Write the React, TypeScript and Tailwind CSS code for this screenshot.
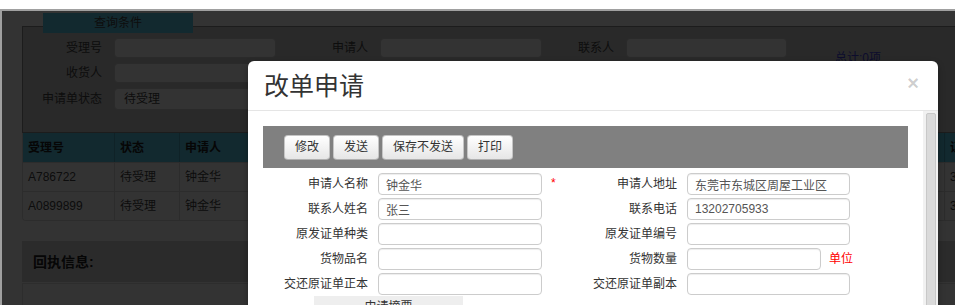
import React from "react";

const font = "font-[family-name:'Liberation_Sans','Noto_Sans_CJK_SC',sans-serif]";

const bgLabel = "shrink-0 text-right text-[12px] leading-[20px] text-[#444]";
const bgInput = "h-[20px] shrink-0 rounded-[4px] border border-[#cfcfcf] bg-white";

// columns 4-7 sit behind the dialog
const columns = ["受理号", "状态", "申请人", "", "", "", "", "证书编号"];
const rows = [
  ["A786722", "待受理", "钟金华", "", "", "", "", "3"],
  ["A0899899", "待受理", "钟金华", "", "", "", "", "3"],
];

const formRows = [
  { l: "申请人名称", lv: "钟金华", star: true, r: "申请人地址", rv: "东莞市东城区周屋工业区" },
  { l: "联系人姓名", lv: "张三", r: "联系电话", rv: "13202705933" },
  { l: "原发证单种类", lv: "", r: "原发证单编号", rv: "" },
  { l: "货物品名", lv: "", r: "货物数量", rv: "", unit: true },
  { l: "交还原证单正本", lv: "", r: "交还原证单副本", rv: "" },
];

function QueryPanel() {
  return (
    <div className="pl-[20px] pt-[2px]">
      <div className="relative z-10 -mb-[7px] ml-[21px] flex h-[20px] w-[150px] items-center justify-center bg-[#5ccbea] text-[12px] leading-[14px] text-[#444]">
        查询条件
      </div>
      <div className="flex h-[107px] w-[1000px] border border-[#8c8c8c] bg-[#cccccc] pt-[11px]">
        <div className="flex flex-col gap-[5px]">
          <div className="flex items-center">
            <span className={`${bgLabel} w-[79px]`}>受理号</span>
            <div className={`${bgInput} ml-[12px] w-[162px]`} />
            <span className={`${bgLabel} w-[92px]`}>申请人</span>
            <div className={`${bgInput} ml-[12px] w-[162px]`} />
            <span className={`${bgLabel} w-[72px]`}>联系人</span>
            <div className={`${bgInput} ml-[12px] w-[161px]`} />
          </div>
          <div className="flex items-center">
            <span className={`${bgLabel} w-[79px]`}>收货人</span>
            <div className={`${bgInput} ml-[12px] w-[162px]`} />
          </div>
          <div className="flex items-center">
            <span className={`${bgLabel} w-[79px]`}>申请单状态</span>
            <div className="ml-[12px] flex h-[22px] w-[200px] items-center rounded-[4px] border border-[#cfcfcf] bg-white pl-[9px] text-[12px] leading-[14px] text-[#444]">
              待受理
            </div>
          </div>
        </div>
        <div className="ml-[48px] pt-[13px] text-[12px] leading-[14px] text-[#4444dd]">总计:0项</div>
      </div>
    </div>
  );
}

function ResultTable() {
  const grid = "grid grid-cols-[92px_65px_153px_153px_153px_153px_153px_120px]";
  return (
    <div className="ml-[20px] w-[1100px] overflow-hidden rounded-bl-[4px] border-b border-l border-[#dddddd]">
      <div className={`${grid} h-[29px] bg-[#5ccbea]`}>
        {columns.map((c, i) => (
          <div key={i} className="flex items-center overflow-hidden whitespace-nowrap border-r border-[#4aa9c4] pl-[5px] text-[12px] font-bold leading-[14px] text-[#222]">
            {c}
          </div>
        ))}
      </div>
      {rows.map((r, i) => (
        <div key={i} className={`${grid} h-[29px] border-t border-[#dddddd] bg-white`}>
          {r.map((v, j) => (
            <div key={j} className="flex items-center border-r border-[#dddddd] pl-[5px] text-[12px] leading-[14px] text-[#444]">
              {v}
            </div>
          ))}
        </div>
      ))}
    </div>
  );
}

function Receipt() {
  return (
    <div className="ml-[20px] mt-[20px] w-[1100px]">
      <div className="flex h-[41px] items-center bg-[#d6d6d6] pl-[11px] text-[14px] font-bold leading-[16px] text-[#222]">
        回执信息:
      </div>
      <div className="mt-[1px] h-[40px] border-l border-t border-[#e2e2e2] bg-white" />
    </div>
  );
}

function Modal() {
  return (
    <div className="absolute left-[248px] top-[61px] z-30 h-[300px] w-[690px] rounded-t-[6px] bg-white shadow-[0_3px_7px_rgba(0,0,0,0.3)]">
      <div className="flex h-[50px] items-center justify-between border-b border-[#e5e5e5] pl-[16px] pr-[19px]">
        <h3 className="text-[25px] leading-[30px] text-[#333]">改单申请</h3>
        <span className="-mt-[5px] text-[20px] font-bold leading-none text-black/20">×</span>
      </div>
      <div className="flex">
        <div className="w-[675px] px-[15px] pt-[15px]">
          <div className="flex h-[42px] gap-[3px] bg-[#808080] pl-[21px] pt-[9px]">
            {["修改", "发送", "保存不发送", "打印"].map((b) => (
              <button
                key={b}
                className="h-[25px] rounded-[4px] border border-[#c5c5c5] border-b-[#b0b0b0] bg-linear-to-b from-white to-[#e6e6e6] px-[10px] text-[12px] leading-[23px] text-[#333]"
              >
                {b}
              </button>
            ))}
          </div>
          <div className="mt-[5px] flex flex-col gap-[3px]">
            {formRows.map((f) => (
              <div key={f.l} className="flex h-[22px] items-center">
                <span className="w-[105px] shrink-0 text-right text-[12px] leading-[14px] text-[#333]">{f.l}</span>
                <input
                  readOnly
                  value={f.lv}
                  className="ml-[10px] h-[22px] w-[164px] shrink-0 rounded-[4px] border border-[#cccccc] px-[7px] text-[12px] text-[#555] shadow-[inset_0_1px_1px_rgba(0,0,0,0.075)] outline-none"
                />
                <span className="w-[30px] shrink-0 self-start pl-[9px] pt-[3px] text-[12px] leading-[14px] text-[#f00]">
                  {f.star ? "*" : ""}
                </span>
                <span className="w-[105px] shrink-0 text-right text-[12px] leading-[14px] text-[#333]">{f.r}</span>
                <input
                  readOnly
                  value={f.rv}
                  className={`ml-[10px] h-[22px] shrink-0 rounded-[4px] border border-[#cccccc] px-[7px] text-[12px] text-[#555] shadow-[inset_0_1px_1px_rgba(0,0,0,0.075)] outline-none ${f.unit ? "w-[134px]" : "w-[163px]"}`}
                />
                {f.unit && <span className="ml-[8px] text-[12px] leading-[14px] text-[#f00]">单位</span>}
              </div>
            ))}
          </div>
          <div className="ml-[51px] mt-[1px] h-[30px] w-[149px] bg-[#eeeeee] pt-[2px] text-center text-[12px] leading-[18px] text-[#333]">
            申请摘要
          </div>
        </div>
        <div className="h-[250px] w-[15px] bg-[#f1f1f1] pl-[3px] pr-[2px] pt-[2px]">
          <div className="h-full rounded-[2px] border border-[#c8c8c8] bg-[#dadada]" />
        </div>
      </div>
    </div>
  );
}

export default function App() {
  return (
    <div className={`relative h-[305px] w-[955px] overflow-hidden bg-white ${font}`}>
      <div className="h-[9px]" />
      <div className="relative h-[296px] overflow-hidden border-l-2 border-t-2 border-[#a0a0a0] bg-white">
        <QueryPanel />
        <ResultTable />
        <Receipt />
        <div className="absolute inset-0 z-20 bg-black/80" />
      </div>
      <Modal />
    </div>
  );
}
